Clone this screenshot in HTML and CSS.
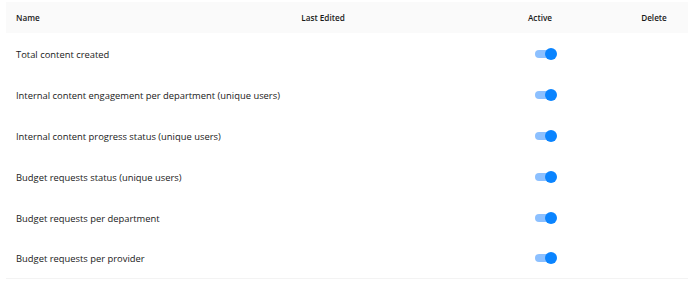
FILE: index.html
```html
<!DOCTYPE html>
<html lang="en">
<head>
  <meta charset="UTF-8">
  <title>Reports</title>
  <link rel="stylesheet" href="styles.css">
</head>
<body>
  <div class="table">
    <div class="row head">
      <div class="cell name">Name</div>
      <div class="cell mid">Last Edited</div>
      <div class="cell mid">Active</div>
      <div class="cell mid">Delete</div>
    </div>
    <div class="row">
      <div class="cell name">Total content created</div>
      <div class="cell mid"></div>
      <div class="cell mid"><span class="toggle"></span></div>
      <div class="cell mid"></div>
    </div>
    <div class="row">
      <div class="cell name">Internal content engagement per department (unique users)</div>
      <div class="cell mid"></div>
      <div class="cell mid"><span class="toggle"></span></div>
      <div class="cell mid"></div>
    </div>
    <div class="row">
      <div class="cell name">Internal content progress status (unique users)</div>
      <div class="cell mid"></div>
      <div class="cell mid"><span class="toggle"></span></div>
      <div class="cell mid"></div>
    </div>
    <div class="row">
      <div class="cell name">Budget requests status (unique users)</div>
      <div class="cell mid"></div>
      <div class="cell mid"><span class="toggle"></span></div>
      <div class="cell mid"></div>
    </div>
    <div class="row">
      <div class="cell name">Budget requests per department</div>
      <div class="cell mid"></div>
      <div class="cell mid"><span class="toggle"></span></div>
      <div class="cell mid"></div>
    </div>
    <div class="row last">
      <div class="cell name">Budget requests per provider</div>
      <div class="cell mid"></div>
      <div class="cell mid"><span class="toggle"></span></div>
      <div class="cell mid"></div>
    </div>
  </div>
</body>
</html>
```

FILE: styles.css
```css
*
    {
    margin: 0;
    padding: 0;
    box-sizing: border-box;
    }

:root
    {
    --txt: #1a1a1a;
    --hdr: #fafafa;
    --line: #f3f3f3;
    --blu: #0a84ff;
    --lbl: #8cc0ff;
    }

body
    {
    background: #ffffff;
    font-family: "Open Sans", sans-serif;
    color: var(--txt);
    }

.table
    {
    margin: 2px 0 0 6px;
    }

.row
    {
    display: grid;
    grid-template-columns: 180px 274px 160px 68px;
    height: 41px;
    padding-top: 1px;
    align-items: center;
    }

.row.head
    {
    height: 31px;
    padding-top: 0;
    background: var(--hdr);
    font-size: 8.2px;
    font-weight: 600;
    }

.row.last
    {
    border-bottom: 1px solid var(--line);
    }

.cell
    {
    min-width: 0;
    white-space: nowrap;
    }

.name
    {
    padding-left: 10px;
    font-size: 9.4px;
    }

.head .name
    {
    font-size: 8.2px;
    }

.mid
    {
    display: flex;
    justify-content: center;
    align-items: center;
    }

.toggle
    {
    position: relative;
    display: block;
    width: 20px;
    height: 8px;
    margin: -1px 0 0 10px;
    border-radius: 4px;
    background: var(--lbl);
    }

.toggle::after
    {
    content: "";
    position: absolute;
    right: -2px;
    top: -2px;
    width: 12px;
    height: 12px;
    border-radius: 50%;
    background: var(--blu);
    }
```
